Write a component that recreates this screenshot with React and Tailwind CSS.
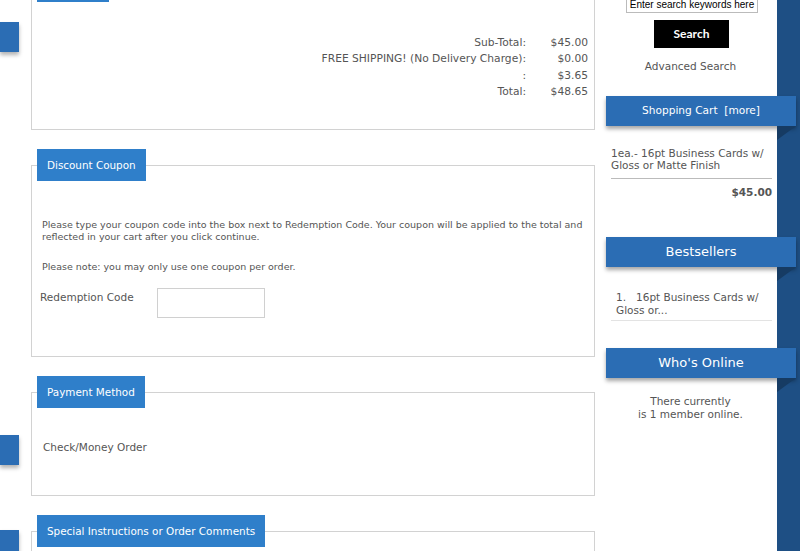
import React from 'react';

const tab = 'ml-[5px] bg-[#2f7fca] text-white px-[10px] h-[32px] leading-[32px] text-[10.4px]';
const box = 'shrink-0 border border-[#d2d2d2] min-w-0';

const Ribbon = ({ children }) => (
    <div className="relative z-10 ml-[6px] w-[190px]">
        <div className="h-[30px] bg-[#2b6db4] text-white text-[13px] flex items-center justify-center shadow-[0_3px_4px_rgba(0,0,0,0.35)]">
            {children}
        </div>
        <div className="absolute right-0 top-[30px] w-0 h-0 border-t-[14px] border-t-[#163b63] border-r-[19px] border-r-transparent" />
    </div>
);

const LeftTab = ({ className }) => (
    <div className={`shrink-0 w-[19px] h-[30px] bg-[#2b6db4] shadow-[0_3px_4px_rgba(0,0,0,0.3)] ${className}`} />
);

const App = () => {
    const totals = [
        ['Sub-Total:', '$45.00'],
        ['FREE SHIPPING! (No Delivery Charge):', '$0.00'],
        [':', '$3.65'],
        ['Total:', '$48.65'],
    ];

    return (
        <div className="flex w-[800px] h-[551px] overflow-hidden bg-white text-[#555] font-['DejaVu_Sans',sans-serif]">
            {/* cut-off column on the left */}
            <div className="w-[20px] shrink-0 flex flex-col">
                <LeftTab className="mt-[22px]" />
                <LeftTab className="mt-[383px]" />
                <LeftTab className="mt-[65px]" />
            </div>

            {/* checkout column */}
            <div className="w-[580px] shrink-0 pl-[11px] pr-[5px] -mt-[30px] flex flex-col gap-[19px]">
                <fieldset className={box}>
                    <legend className={`${tab} w-[72px]`} aria-label="Order Totals" />
                    <table className="ml-auto mt-[33px] mb-[29px] mr-[6px] text-[10.7px] leading-[16.3px]">
                        <tbody>
                            {totals.map(([label, value]) => (
                                <tr key={value}>
                                    <td className="text-right">{label}</td>
                                    <td className="w-[62px] text-right">{value}</td>
                                </tr>
                            ))}
                        </tbody>
                    </table>
                </fieldset>

                <fieldset className={`${box} h-[208px]`}>
                    <legend className={tab}>Discount Coupon</legend>
                    <div className="pl-[10px] pt-[38px] text-[9.5px] leading-[12px]">
                        <p>Please type your coupon code into the box next to Redemption Code. Your coupon will be applied to the total and<br />reflected in your cart after you click continue.</p>
                        <p className="mt-[18px]">Please note: you may only use one coupon per order.</p>
                    </div>
                    <div className="flex items-start mt-[15px] pl-[8px]">
                        <label className="w-[117px] text-[10.5px] leading-[16px] mt-[1px]">Redemption Code</label>
                        <input className="w-[108px] h-[30px] border border-[#d0d0d0] outline-none" />
                    </div>
                </fieldset>

                <fieldset className={`${box} h-[120px]`}>
                    <legend className={tab}>Payment Method</legend>
                    <div className="pl-[11px] pt-[31px] text-[10.5px] leading-[16px]">Check/Money Order</div>
                </fieldset>

                <fieldset className={`${box} h-[60px]`}>
                    <legend className={tab}>Special Instructions or Order Comments</legend>
                </fieldset>
            </div>

            {/* sidebar */}
            <div className="w-[177px] shrink-0 -mt-[4px] flex flex-col">
                <input
                    className="ml-[26px] w-[132px] h-[17px] border border-[#bbb] text-[10px] text-black text-center outline-none font-['Liberation_Sans',sans-serif] placeholder:text-black"
                    placeholder="Enter search keywords here"
                />
                <button className="self-start ml-[54px] mt-[7px] w-[75px] h-[28px] bg-black text-white text-[12px] font-bold font-['Lato',sans-serif]">
                    Search
                </button>
                <div className="mt-[11px] text-center text-[10.5px] leading-[14px] pl-[4px]">Advanced Search</div>

                <div className="mt-[23px]">
                    <Ribbon><span className="text-[10.6px]">Shopping Cart&nbsp;&nbsp;[more]</span></Ribbon>
                </div>
                <div className="pl-[11px] pr-[5px] mt-[21px] text-[10.5px] leading-[12px]">
                    <p>1ea.- 16pt Business Cards w/<br />Gloss or Matte Finish</p>
                    <div className="mt-[7px] border-t border-[#bbb]" />
                    <p className="mt-[7px] text-right font-bold">$45.00</p>
                </div>

                <div className="mt-[39px]">
                    <Ribbon>Bestsellers</Ribbon>
                </div>
                <div className="pl-[11px] pr-[5px] mt-[24px] text-[10.5px] leading-[13px]">
                    <p className="pl-[5px] pb-[3px]">1.&nbsp;&nbsp; 16pt Business Cards w/<br />Gloss or...</p>
                    <div className="border-t border-[#e3e3e3]" />
                </div>

                <div className="mt-[27px]">
                    <Ribbon>Who&apos;s Online</Ribbon>
                </div>
                <p className="mt-[17px] text-center text-[10.5px] leading-[13px] pl-[4px]">
                    There currently<br />is 1 member online.
                </p>
            </div>

            <div className="flex-1 bg-[#1e4f84]" />
        </div>
    );
};

export default App;
